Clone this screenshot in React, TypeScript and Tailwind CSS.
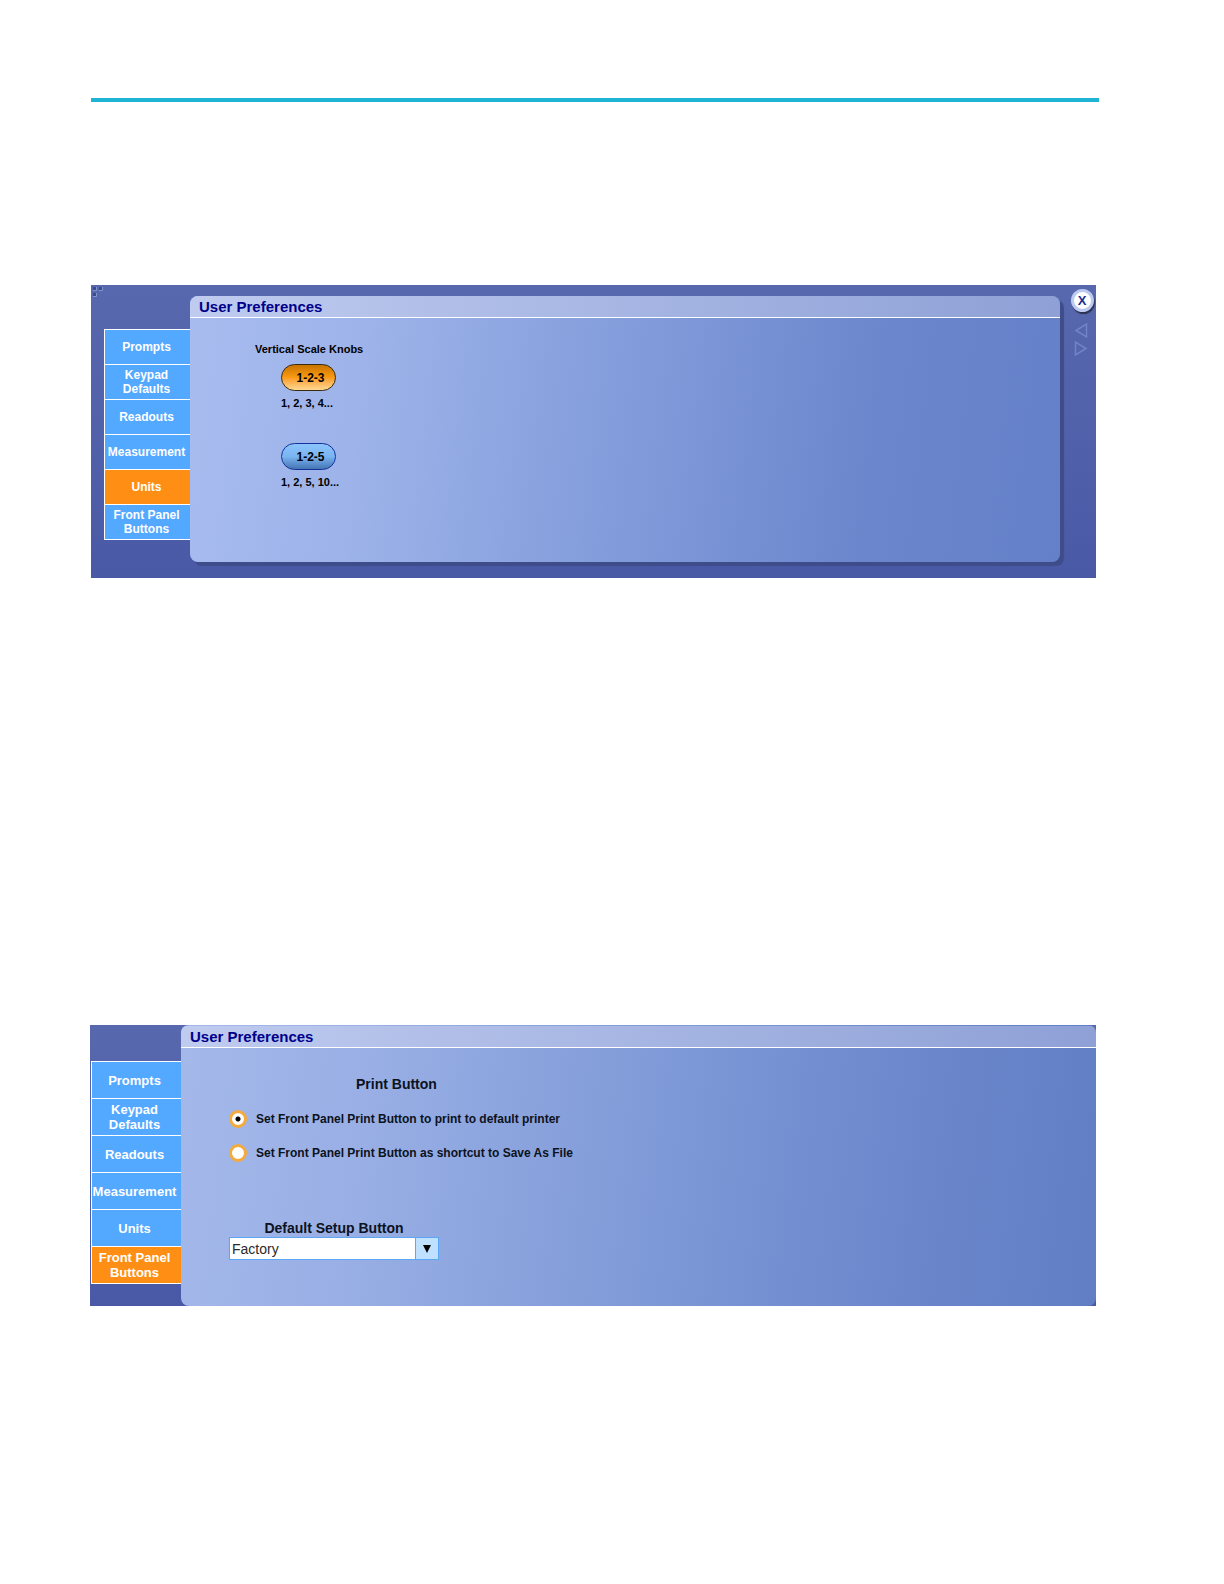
import { useId, useState } from "react";

const TABS = ["Prompts", "Keypad Defaults", "Readouts", "Measurement", "Units", "Front Panel Buttons"];

function Tabs({ active, large = false }: { active: string; large?: boolean }) {
  return (
    <nav aria-label="Preference pages" className="flex flex-col border-b border-l border-white">
      {TABS.map((name) => (
        <button
          key={name}
          type="button"
          aria-pressed={name === active}
          className={
            "flex items-center justify-center border-t border-white text-center font-bold text-white " +
            (large ? "h-[37px] pr-2 pl-1 text-[13px] leading-[15px] " : "h-[35px] pr-2 pl-1.5 text-[12px] leading-[14px] ") +
            (name === active ? "bg-[#ff8f14]" : "bg-[#53a8ff]")
          }
        >
          {name}
        </button>
      ))}
    </nav>
  );
}

function Title() {
  return (
    <h2 className="border-b border-white bg-linear-to-r from-[#bfcbef] to-[#8ea0d6] pl-[9px] text-[15px] leading-[21px] font-bold text-[#00008b]">
      User Preferences
    </h2>
  );
}

function Knob({ label, caption, selected }: { label: string; caption: string; selected: boolean }) {
  return (
    <div className="flex flex-col items-start gap-[3px]">
      <button
        type="button"
        aria-pressed={selected}
        className={
          "flex h-[27px] w-[55px] items-center justify-center rounded-full border pl-1 text-[12px] font-bold text-black " +
          (selected
            ? "border-[#3a2a10] bg-linear-to-b from-[#c87400] via-[#f99a12] to-[#ffd890]"
            : "border-[#14309a] bg-linear-to-b from-[#8cc4fc] via-[#7ab4f2] to-[#4676b4]")
        }
      >
        {label}
      </button>
      <span className="text-[11px] leading-[18px] font-bold text-black">{caption}</span>
    </div>
  );
}

function UnitsWindow() {
  return (
    <section className="relative mr-[3px] flex bg-linear-to-b from-[#5868ae] to-[#4a59a6]">
      <svg className="absolute top-0 left-0" width="14" height="14" viewBox="0 0 14 14" fill="none" aria-hidden="true">
        <path d="M2 5.500h3.500V2M8 5.500h3.500V2M2 11.500h3.500V8" stroke="#8396cb" />
        <path d="M2 2h3v3h-3zM8 2h3v3h-3zM2 8h3v3h-3z" fill="#3c4c8a" />
      </svg>
      <div className="w-[99px] shrink-0 pt-[44px] pl-[13px]">
        <Tabs active="Units" />
      </div>
      <div className="mt-[11px] mb-4 min-w-0 flex-1 overflow-hidden rounded-lg bg-[linear-gradient(97deg,#a8bcf0_0%,#9db3e9_20%,#829cdb_50%,#6b86cc_78%,#6480c8_100%)] shadow-[4px_4px_1px_#3e4c8a]">
        <Title />
        <div className="flex flex-col items-start px-[65px] pt-[22px] pb-[71px]">
          <h3 className="text-[11px] leading-[18px] font-bold text-black">Vertical Scale Knobs</h3>
          <div className="mt-[6px] flex flex-col gap-[31px] pl-[26px]">
            <Knob label="1-2-3" caption="1, 2, 3, 4..." selected />
            <Knob label="1-2-5" caption="1, 2, 5, 10..." selected={false} />
          </div>
        </div>
      </div>
      <div className="flex w-9 shrink-0 flex-col items-center pt-1 pl-2">
        <button
          type="button"
          aria-label="Close"
          className="flex size-[23px] items-center justify-center rounded-full border-[3px] border-[#bccaf2] bg-white text-[13px] leading-none font-bold text-[#1c2f96] shadow-[1px_2px_1px_#2c3252]"
        >
          X
        </button>
        <div className="mt-[10px] flex flex-col gap-px pr-[3px]">
          <button type="button" aria-label="Previous">
            <svg className="block" width="14" height="17" viewBox="0 0 14 17" fill="none">
              <path d="M12.500 2v13L2 8.500z" stroke="#7284c8" strokeWidth="1.500" />
            </svg>
          </button>
          <button type="button" aria-label="Next">
            <svg className="block" width="14" height="17" viewBox="0 0 14 17" fill="none">
              <path d="M1.500 2v13L12 8.500z" stroke="#7284c8" strokeWidth="1.500" />
            </svg>
          </button>
        </div>
      </div>
    </section>
  );
}

const PRINT_OPTIONS = [
  "Set Front Panel Print Button to print to default printer",
  "Set Front Panel Print Button as shortcut to Save As File",
];

function FrontPanelWindow() {
  const id = useId();
  const [choice, setChoice] = useState(0);
  return (
    <section className="mr-[3px] -ml-px flex bg-linear-to-b from-[#5868ae] to-[#4a59a6]">
      <div className="w-[91px] shrink-0 pt-9 pl-px">
        <Tabs active="Front Panel Buttons" large />
      </div>
      <div className="min-w-0 flex-1 overflow-hidden rounded-lg bg-[linear-gradient(97deg,#a4b8ea_0%,#99afe5_20%,#809bd8_50%,#6b86cb_80%,#617ec5_100%)] pt-px">
        <Title />
        <div className="flex flex-col items-start px-12 pt-[26px] pb-[46px]">
          <fieldset className="flex flex-col gap-4">
            <legend className="mb-4 pl-[127px] text-[14px] leading-5 font-bold text-[#0c1220]">Print Button</legend>
            {PRINT_OPTIONS.map((text, i) => (
              <label key={text} className="flex items-center gap-[9px] text-[12px] leading-[18px] font-bold text-[#0c1220]">
                <input
                  type="radio"
                  name={id + "print"}
                  checked={choice === i}
                  onChange={() => setChoice(i)}
                  className="size-[18px] shrink-0 appearance-none rounded-full border-[3px] border-[#f2ab3c] bg-white checked:bg-[radial-gradient(circle,#000_2px,#fff_3px)]"
                />
                {text}
              </label>
            ))}
          </fieldset>
          <div className="mt-[57px] flex w-[210px] flex-col">
            <label htmlFor={id + "setup"} className="text-center text-[14px] leading-[18px] font-bold text-[#0c1220]">
              Default Setup Button
            </label>
            <div className="relative">
              <select
                id={id + "setup"}
                className="block h-[23px] w-full appearance-none border border-[#5ba6f5] bg-white pr-6 pl-[2px] text-[14px] leading-5 text-[#2a2a2a]"
              >
                <option>Factory</option>
              </select>
              <span className="pointer-events-none absolute inset-y-0 right-0 flex w-6 items-center justify-center border border-[#5ba6f5] bg-[#bfe0ff]">
                <svg width="8" height="8" viewBox="0 0 8 8" aria-hidden="true">
                  <path d="M0 0h8L4 8z" fill="#000" />
                </svg>
              </span>
            </div>
          </div>
        </div>
      </div>
    </section>
  );
}

export default function App() {
  return (
    <main className="min-h-screen bg-white pt-[98px] pr-[125px] pl-[91px] font-['Liberation_Sans',Arial,sans-serif]">
      <hr className="h-1 border-0 bg-[#1fb4d4]" />
      <div className="mt-[183px] flex flex-col gap-[447px]">
        <UnitsWindow />
        <FrontPanelWindow />
      </div>
    </main>
  );
}
